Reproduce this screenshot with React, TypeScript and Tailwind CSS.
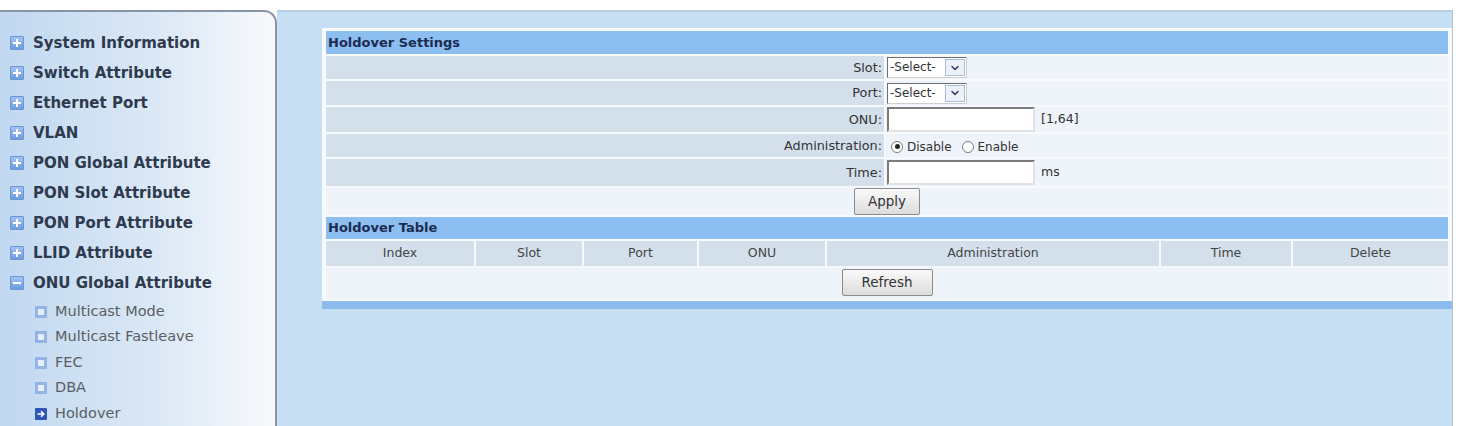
import { ChevronDown } from 'lucide-react'

const MENU = [
  'System Information',
  'Switch Attribute',
  'Ethernet Port',
  'VLAN',
  'PON Global Attribute',
  'PON Slot Attribute',
  'PON Port Attribute',
  'LLID Attribute',
]

const SUB_MENU = ['Multicast Mode', 'Multicast Fastleave', 'FEC', 'DBA']

const COLUMNS = ['Index', 'Slot', 'Port', 'ONU', 'Administration', 'Time', 'Delete']

const FONT = { fontFamily: '"DejaVu Sans", Verdana, sans-serif' }

function TreeIcon({ open = false }: { open?: boolean }) {
  return (
    <span className="relative w-[14px] h-[14px] shrink-0 rounded-[1px] border border-[#6b95d6] bg-gradient-to-b from-[#a3c3f2] to-[#6d9ce2]">
      <span className="absolute left-[2px] right-[2px] top-[5px] h-[2px] bg-white" />
      {!open && <span className="absolute top-[2px] bottom-[2px] left-[5px] w-[2px] bg-white" />}
    </span>
  )
}

function LeafIcon({ active = false }: { active?: boolean }) {
  if (active) {
    return (
      <span className="w-[12px] h-[12px] shrink-0 rounded-[1px] bg-[#2f55b8] flex items-center justify-center">
        <svg width="8" height="8" viewBox="0 0 8 8">
          <path d="M0.5 4h6M4 1.2L6.8 4L4 6.8" stroke="white" strokeWidth="1.6" fill="none" />
        </svg>
      </span>
    )
  }
  return (
    <span className="w-[12px] h-[12px] shrink-0 border-[3px] border-[#93b4e6] bg-[#e6eefa]" />
  )
}

function Select() {
  return (
    <div className="flex w-[80px] h-[21px] border border-t-[#6f6f6f] border-l-[#6f6f6f] border-b-[#cfcfcf] border-r-[#cfcfcf] bg-white">
      <span className="flex-1 pl-[2px] text-[12px] leading-[19px] text-[#333]">-Select-</span>
      <span className="w-[20px] m-[1px] border border-[#a9bedb] bg-[#edf2fa] flex items-center justify-center">
        <ChevronDown size={12} strokeWidth={3} className="text-[#2b3f6a]" />
      </span>
    </div>
  )
}

function TextBox() {
  return (
    <div className="w-[148px] h-[25px] bg-white border-2 border-t-[#7b7b7b] border-l-[#7b7b7b] border-b-[#e2e2e2] border-r-[#e2e2e2]" />
  )
}

function Radio({ checked = false }: { checked?: boolean }) {
  return (
    <span className="w-[12px] h-[12px] rounded-full border border-[#7a7a7a] bg-white flex items-center justify-center">
      {checked && <span className="w-[5px] h-[5px] rounded-full bg-[#222]" />}
    </span>
  )
}

function Button({ label, width }: { label: string; width: string }) {
  return (
    <div
      className={`${width} h-[27px] flex items-center justify-center rounded-[2px] border border-[#8b8b8b] bg-gradient-to-b from-[#fafafa] to-[#dcdcdc] text-[13.5px] text-[#333]`}
    >
      {label}
    </div>
  )
}

function FormRow({ label, height, children }: { label: string; height: string; children: React.ReactNode }) {
  return (
    <div className={`grid grid-cols-[558px_1fr] gap-x-[2px] ${height}`}>
      <div className="bg-[#d3e0ec] flex items-center justify-end pr-[2px] text-[12.8px] text-[#333]">{label}</div>
      <div className="bg-[#eef4fa] flex items-center gap-[6px] pl-[1px]">{children}</div>
    </div>
  )
}

function Sidebar() {
  return (
    <aside className="w-[277px] shrink-0 h-full rounded-tr-[13px] border-t-2 border-r-2 border-[#8893a6] bg-gradient-to-r from-[#c0d8f0] via-[#dde9f6] via-60% to-[#f7fafd] pt-[16px]">
      {MENU.map((item) => (
        <div key={item} className="h-[30px] flex items-center gap-[9px] pl-[10px]">
          <TreeIcon />
          <span className="text-[15px] font-bold text-[#2e3a4e]">{item}</span>
        </div>
      ))}
      <div className="h-[30px] flex items-center gap-[9px] pl-[10px]">
        <TreeIcon open />
        <span className="text-[15px] font-bold text-[#2e3a4e]">ONU Global Attribute</span>
      </div>
      <div className="pt-[1px]">
        {SUB_MENU.map((item) => (
          <div key={item} className="h-[25.5px] flex items-center gap-[8px] pl-[35px]">
            <LeafIcon />
            <span className="text-[14.5px] text-[#5a5d63]">{item}</span>
          </div>
        ))}
        <div className="h-[25.5px] flex items-center gap-[8px] pl-[35px]">
          <LeafIcon active />
          <span className="text-[14.5px] text-[#5a5d63]">Holdover</span>
        </div>
      </div>
    </aside>
  )
}

export default function App() {
  return (
    <div className="w-[1459px] h-[426px] bg-white pt-[10px] pr-[6px] flex overflow-hidden" style={FONT}>
      <Sidebar />

      <main className="flex-1 h-full bg-[#c7dff3] border-t-2 border-r border-t-[#b9cde0] border-r-[#b5c3d2] pl-[45px] pt-[16px]">
        <div className="bg-[#f7fafd]">
          <div className="p-[4px] pt-[3px] pb-[2px] flex flex-col gap-[2px] text-[12.5px]">
            {/* Holdover settings */}
            <div className="h-[23px] bg-[#8dbef0] pl-[2px] flex items-center text-[13px] font-bold text-[#1b2c52]">
              Holdover Settings
            </div>
            <FormRow label="Slot:" height="h-[23px]">
              <Select />
            </FormRow>
            <FormRow label="Port:" height="h-[24px]">
              <Select />
            </FormRow>
            <FormRow label="ONU:" height="h-[25px]">
              <TextBox />
              <span className="text-[#333]">[1,64]</span>
            </FormRow>
            <FormRow label="Administration:" height="h-[23px]">
              <div className="flex items-center gap-[4px] pl-[4px] pt-[2px] text-[12px] text-[#333]">
                <Radio checked />
                <span>Disable</span>
                <span className="w-[2px]" />
                <Radio />
                <span>Enable</span>
              </div>
            </FormRow>
            <FormRow label="Time:" height="h-[27px]">
              <TextBox />
              <span className="text-[#333]">ms</span>
            </FormRow>
            <div className="h-[27px] bg-[#eef4fa] flex justify-center">
              <Button label="Apply" width="w-[66px]" />
            </div>

            {/* Holdover table */}
            <div className="h-[22px] bg-[#8dbef0] pl-[2px] flex items-center text-[13px] font-bold text-[#1b2c52]">
              Holdover Table
            </div>
            <div className="grid grid-cols-[148px_106px_113px_126px_332px_130px_1fr] gap-x-[2px] h-[25px]">
              {COLUMNS.map((col) => (
                <div key={col} className="bg-[#d3e0ec] flex items-center justify-center text-[#444]">
                  {col}
                </div>
              ))}
            </div>
            <div className="h-[31px] bg-[#eef4fa] flex justify-center pt-[1px]">
              <Button label="Refresh" width="w-[91px]" />
            </div>
          </div>
          <div className="h-[8px] bg-[#8cbcee]" />
        </div>
      </main>
    </div>
  )
}
